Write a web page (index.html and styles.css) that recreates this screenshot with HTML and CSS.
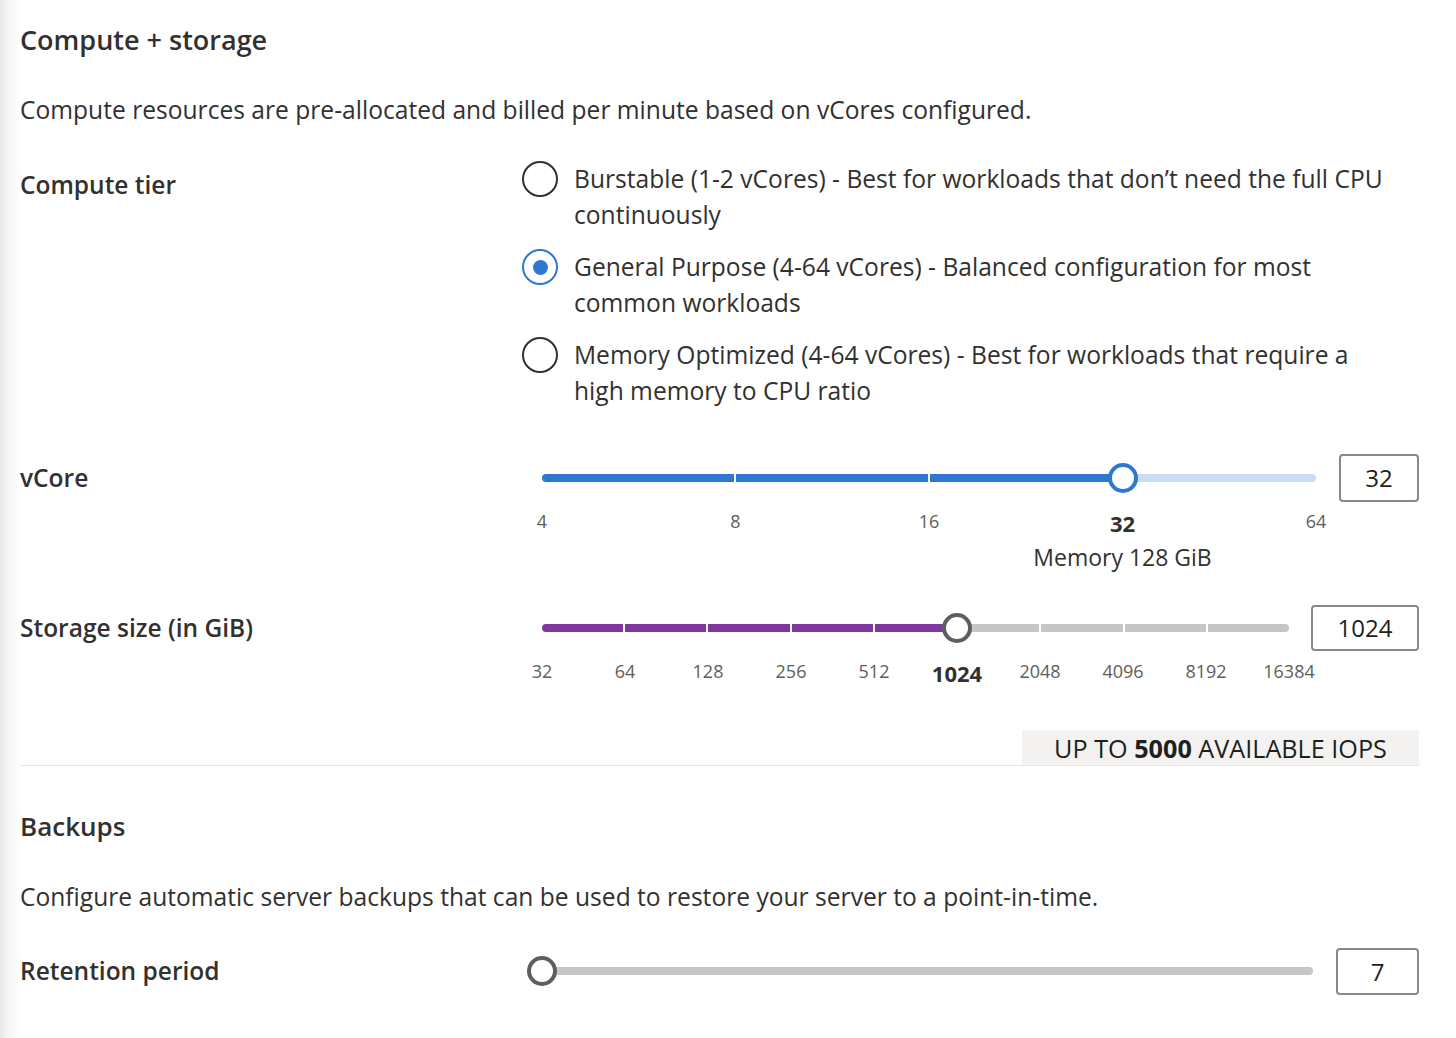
FILE: index.html
```html
<!DOCTYPE html>
<html lang="en">
<head>
<meta charset="utf-8">
<title>Compute + storage</title>
<link rel="stylesheet" href="styles.css">
</head>
<body>
<main class="page">
  <section class="section">
    <h2 class="section-title">Compute + storage</h2>
    <p class="section-desc">Compute resources are pre-allocated and billed per minute based on vCores configured.</p>

    <div class="field field-tier">
      <div class="field-label">Compute tier</div>
      <div class="radio-group">
        <div class="radio">
          <span class="radio-circle"></span>
          <span class="radio-text">Burstable (1-2 vCores) - Best for workloads that don’t need the full CPU continuously</span>
        </div>
        <div class="radio">
          <span class="radio-circle checked"></span>
          <span class="radio-text">General Purpose (4-64 vCores) - Balanced configuration for most common workloads</span>
        </div>
        <div class="radio">
          <span class="radio-circle"></span>
          <span class="radio-text">Memory Optimized (4-64 vCores) - Best for workloads that require a high memory to CPU ratio</span>
        </div>
      </div>
    </div>

    <div class="field field-slider field-vcore">
      <div class="field-label slider-label">vCore</div>
      <div class="control">
        <div class="slider">
          <div class="track-area">
            <div class="track">
              <span class="seg seg-blue"></span>
              <span class="seg seg-blue"></span>
              <span class="seg seg-blue"></span>
              <span class="seg seg-lightblue"></span>
            </div>
            <span class="thumb thumb-blue" style="left:75%"></span>
          </div>
          <div class="ticks">
            <div class="tick"><span>4</span></div>
            <div class="tick"><span>8</span></div>
            <div class="tick"><span>16</span></div>
            <div class="tick tick-current"><span class="tick-value">32</span><span class="tick-note">Memory 128 GiB</span></div>
            <div class="tick"><span>64</span></div>
          </div>
        </div>
        <div class="value-box value-vcore">32</div>
      </div>
    </div>

    <div class="field field-slider field-storage">
      <div class="field-label slider-label">Storage size (in GiB)</div>
      <div class="control">
        <div class="slider">
          <div class="track-area">
            <div class="track">
              <span class="seg seg-purple"></span>
              <span class="seg seg-purple"></span>
              <span class="seg seg-purple"></span>
              <span class="seg seg-purple"></span>
              <span class="seg seg-purple"></span>
              <span class="seg seg-grey"></span>
              <span class="seg seg-grey"></span>
              <span class="seg seg-grey"></span>
              <span class="seg seg-grey"></span>
            </div>
            <span class="thumb thumb-grey" style="left:55.556%"></span>
          </div>
          <div class="ticks">
            <div class="tick"><span>32</span></div>
            <div class="tick"><span>64</span></div>
            <div class="tick"><span>128</span></div>
            <div class="tick"><span>256</span></div>
            <div class="tick"><span>512</span></div>
            <div class="tick tick-current"><span class="tick-value">1024</span></div>
            <div class="tick"><span>2048</span></div>
            <div class="tick"><span>4096</span></div>
            <div class="tick"><span>8192</span></div>
            <div class="tick"><span>16384</span></div>
          </div>
        </div>
        <div class="value-box value-storage">1024</div>
      </div>
    </div>

    <div class="iops-row">
      <div class="iops-badge">UP TO <strong>5000</strong> AVAILABLE IOPS</div>
    </div>
  </section>

  <section class="section section-backups">
    <h2 class="section-title">Backups</h2>
    <p class="section-desc desc-backups">Configure automatic server backups that can be used to restore your server to a point-in-time.</p>

    <div class="field field-slider field-retention">
      <div class="field-label slider-label">Retention period</div>
      <div class="control">
        <div class="slider">
          <div class="track-area">
            <div class="track">
              <span class="seg seg-grey"></span>
            </div>
            <span class="thumb thumb-grey" style="left:0%"></span>
          </div>
        </div>
        <div class="value-box value-retention">7</div>
      </div>
    </div>
  </section>
</main>
</body>
</html>
```

FILE: styles.css
```css
* {
  box-sizing: border-box;
  margin: 0;
  padding: 0;
}

html, body {
  width: 1456px;
  min-height: 1038px;
}

body {
  font-family: "Open Sans", "Noto Sans", "Liberation Sans", sans-serif;
  color: #323130;
  background: linear-gradient(to right, #e9e9e9 0px, #f5f5f5 8px, #ffffff 20px);
}

.page {
  padding: 22px 37px 0 20px;
}

.section-title {
  font-size: 27px;
  font-weight: 600;
  line-height: 36px;
}

.section-backups .section-title {
  font-size: 26px;
}

.section-desc {
  font-size: 24.6px;
  line-height: 36px;
  margin-top: 34px;
}

.field {
  display: grid;
  grid-template-columns: 502px 1fr;
}

.field-label {
  font-size: 24.5px;
  font-weight: 600;
  line-height: 36px;
}

.field-tier {
  margin-top: 33px;
}

.field-tier .field-label {
  padding-top: 6px;
}

.radio-group {
  display: flex;
  flex-direction: column;
  gap: 16px;
}

.radio {
  display: flex;
  align-items: flex-start;
  gap: 16px;
  font-size: 24.6px;
  line-height: 36px;
}

.radio-text {
  max-width: 820px;
}

.radio-circle {
  flex: none;
  width: 36px;
  height: 36px;
  border: 2px solid #323130;
  border-radius: 50%;
  display: flex;
  align-items: center;
  justify-content: center;
}

.radio-circle.checked {
  border-color: #2f78d0;
}

.radio-circle.checked::after {
  content: "";
  width: 15px;
  height: 15px;
  border-radius: 50%;
  background: #2f78d0;
}

.slider-label {
  padding-top: 5px;
}

.field-vcore {
  margin-top: 46px;
}

.field-storage {
  margin-top: 32px;
}

.control {
  display: flex;
  align-items: flex-start;
  gap: 2px;
}

.slider {
  flex: 1;
  padding: 0 20px;
}

.track-area {
  position: relative;
  height: 46px;
  display: flex;
  align-items: center;
}

.track {
  display: flex;
  gap: 2px;
  width: 100%;
  height: 8px;
}

.seg {
  flex: 1;
  height: 8px;
}

.seg:first-child {
  border-top-left-radius: 4px;
  border-bottom-left-radius: 4px;
}

.seg:last-child {
  border-top-right-radius: 4px;
  border-bottom-right-radius: 4px;
}

.seg-blue { background: #2f78d0; }
.seg-lightblue { background: #c9ddf2; }
.seg-purple { background: #7f389f; }
.seg-grey { background: #c8c6c4; }

.thumb {
  position: absolute;
  top: 50%;
  width: 30px;
  height: 30px;
  border: 4px solid #605e5c;
  border-radius: 50%;
  background: #ffffff;
  transform: translate(-50%, -50%);
}

.thumb-blue { border-color: #2f78d0; }
.thumb-grey { border-color: #605e5c; }

.ticks {
  display: flex;
  justify-content: space-between;
  margin-top: 6px;
}

.tick {
  width: 0;
  display: flex;
  flex-direction: column;
  align-items: center;
  white-space: nowrap;
  font-size: 18px;
  line-height: 28px;
  color: #605e5c;
}

.tick-current {
  color: #323130;
}

.tick-value {
  font-size: 22px;
  font-weight: 700;
  padding-top: 2px;
}

.tick-note {
  font-size: 23px;
  font-weight: 400;
  line-height: 32px;
  margin-top: 4px;
}

.value-box {
  flex: none;
  height: 46px;
  border: 2px solid #8a8886;
  border-radius: 4px;
  font-size: 24px;
  line-height: 42px;
  text-align: center;
  color: #201f1e;
  background: #fff;
}

.value-vcore { width: 80px; height: 48px; line-height: 44px; margin-top: -1px; margin-left: 1px; }
.value-storage { width: 108px; }
.value-retention { width: 83px; height: 47px; line-height: 43px; margin-left: 1px; }

.iops-row {
  display: flex;
  justify-content: flex-end;
  margin-top: 43px;
  border-bottom: 1px solid #e8e6e4;
}

.iops-badge {
  width: 397px;
  height: 35px;
  background: #f3f2f1;
  font-size: 25.2px;
  line-height: 36px;
  text-align: center;
  color: #201f1e;
}

.iops-badge strong {
  font-weight: 700;
}

.section-backups {
  padding-top: 42px;
}

.desc-backups {
  margin-top: 35px;
}

.field-retention {
  margin-top: 33px;
}
```
